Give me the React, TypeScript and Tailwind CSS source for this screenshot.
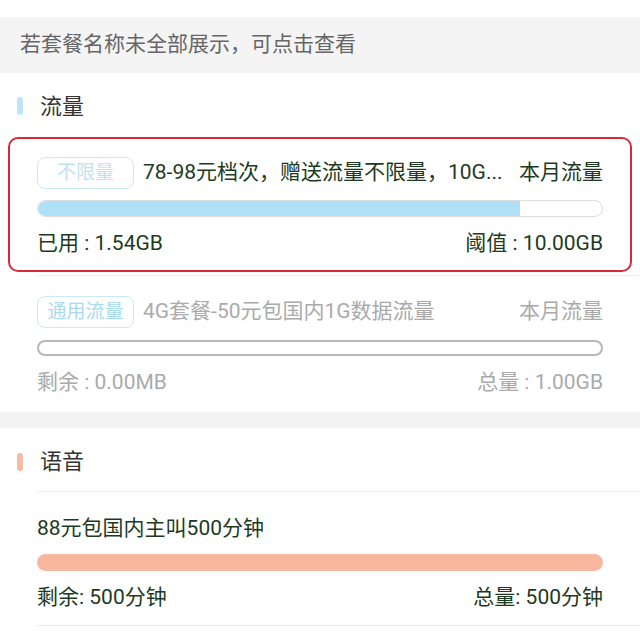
import React from "react";

const FONT = { fontFamily: "Roboto, 'Noto Sans CJK SC', sans-serif" };

function SectionHeader({ title, bar }: { title: string; bar: string }) {
  return (
    <div className="flex items-center h-[64px] pl-[17px] pt-[2px]">
      <span className={`w-[6px] h-[18px] rounded-full ${bar}`} />
      <span className="ml-[17px] text-[22px] text-[#333]">{title}</span>
    </div>
  );
}

export default function App() {
  return (
    <div className="w-[640px] h-[644px] bg-white overflow-hidden" style={FONT}>
      <div className="h-[17px] bg-white" />
      {/* notice */}
      <div className="h-[56px] bg-[#f4f4f4] flex items-center pl-[20px] text-[21px] text-[#666]">
        若套餐名称未全部展示，可点击查看
      </div>

      {/* 流量 */}
      <SectionHeader title="流量" bar="bg-[#bfe5fb]" />

      <div className="mx-[8px] border-[2.5px] border-[#d42a3c] rounded-[10px] h-[135px] px-[27px] pt-[18px]">
        <div className="flex items-center h-[32px]">
          <span className="h-[32px] w-[97px] shrink-0 flex items-center justify-center border border-[#cde9f5] rounded-[8px] text-[19px] text-[#bfe2f2]">
            不限量
          </span>
          <span className="ml-[9px] text-[21px] text-[#1e3a1e] truncate flex-1">
            78-98元档次，赠送流量不限量，10G...
          </span>
          <span className="text-[21px] text-[#1e3a1e]">本月流量</span>
        </div>
        <div className="mt-[11px] h-[17px] rounded-full border border-[#dcdcdc] bg-white overflow-hidden">
          <div className="h-full bg-[#afe0f7] rounded-l-full" style={{ width: "85.5%" }} />
        </div>
        <div className="mt-[12px] flex justify-between text-[21px] text-[#1e3a1e] leading-[28px]">
          <span>已用 : 1.54GB</span>
          <span>阈值 : 10.00GB</span>
        </div>
      </div>

      <div className="ml-[37px] h-px bg-[#ececec] mt-[3px]" />

      <div className="px-[37px] pt-[20px]">
        <div className="flex items-center h-[32px]">
          <span className="h-[32px] w-[97px] shrink-0 flex items-center justify-center border border-[#cde9f5] rounded-[8px] text-[19px] text-[#a9daf0]">
            通用流量
          </span>
          <span className="ml-[9px] text-[21px] text-[#aaa] flex-1">4G套餐-50元包国内1G数据流量</span>
          <span className="text-[21px] text-[#aaa]">本月流量</span>
        </div>
        <div className="mt-[12px] h-[16px] rounded-full border-2 border-[#b8b8b8] bg-white" />
        <div className="mt-[12px] flex justify-between text-[21px] text-[#aaa] leading-[28px]">
          <span>剩余 : 0.00MB</span>
          <span>总量 : 1.00GB</span>
        </div>
      </div>

      <div className="mt-[16px] h-[16px] bg-[#f4f4f4]" />

      {/* 语音 */}
      <div className="flex items-center h-[63px] pl-[17px] pt-[4px]">
        <span className="w-[6px] h-[18px] rounded-full bg-[#f9b9a3]" />
        <span className="ml-[17px] text-[22px] text-[#333]">语音</span>
      </div>
      <div className="ml-[37px] h-px bg-[#ececec]" />
      <div className="px-[37px] pt-[22px]">
        <div className="text-[21px] text-[#1e3a1e] leading-[28px]">88元包国内主叫500分钟</div>
        <div className="mt-[12px] h-[17px] rounded-full bg-[#f8b8a0]" />
        <div className="mt-[12px] flex justify-between text-[21px] text-[#1e3a1e] leading-[28px]">
          <span>剩余: 500分钟</span>
          <span>总量: 500分钟</span>
        </div>
      </div>
      <div className="ml-[37px] mt-[14px] h-px bg-[#ececec]" />
    </div>
  );
}
